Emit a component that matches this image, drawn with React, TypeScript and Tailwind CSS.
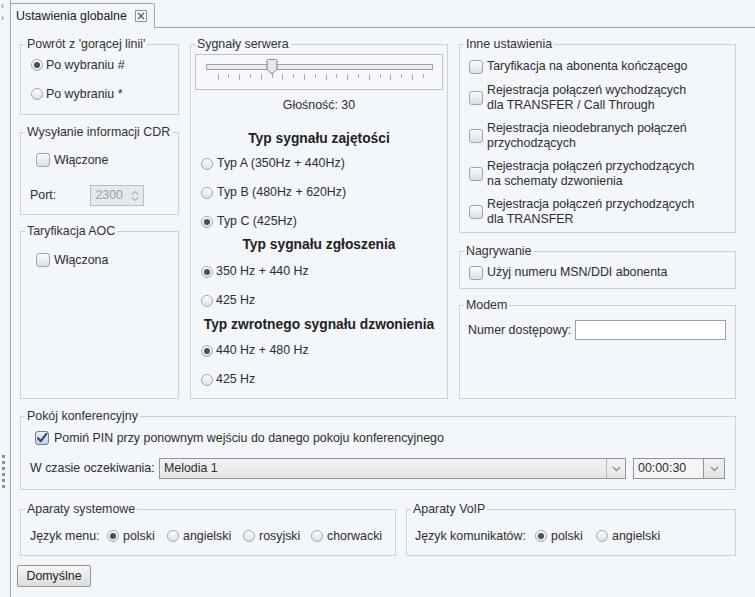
import React from "react";

function Radio({ checked }: { checked?: boolean }) {
  return (
    <span className="inline-flex w-[12px] h-[12px] rounded-full border border-[#a3a9b0] bg-linear-to-b from-[#fdfdfd] to-[#dfe2e6] items-center justify-center shrink-0">
      {checked && <span className="w-[6px] h-[6px] rounded-full bg-[#435164]" />}
    </span>
  );
}

function Check({ checked }: { checked?: boolean }) {
  if (checked)
    return (
      <span className="inline-flex w-[14px] h-[14px] rounded-[3px] border border-[#6e7f96] bg-linear-to-b from-[#e9eff7] to-[#c6d2e2] items-center justify-center shrink-0">
        <svg width="12" height="12" viewBox="0 0 12 12">
          <path d="M2 6.2 L4.8 9.2 L10.4 1.8" fill="none" stroke="#2d4f7e" strokeWidth="2.2" strokeLinecap="round" strokeLinejoin="round" />
        </svg>
      </span>
    );
  return (
    <span className="inline-block w-[14px] h-[14px] rounded-[3px] border border-[#a0a5ac] bg-linear-to-b from-[#fbfbfb] to-[#dcdfe3] shrink-0" />
  );
}

function Group({ title, className, children }: { title: string; className?: string; children?: React.ReactNode }) {
  return (
    <fieldset className={`border border-[#cdd2d8] min-w-0 ${className ?? ""}`}>
      <legend className="ml-[4px] px-[2px] leading-[15px] text-[#333]">{title}</legend>
      {children}
    </fieldset>
  );
}

function Slider() {
  const ticks = [];
  for (let i = 0; i < 20; i++) {
    const x = 22 + i * 10.8;
    ticks.push(<line key={i} x1={x} x2={x} y1={19} y2={i % 2 === 0 ? 25 : 23} stroke="#a9aeb5" strokeWidth="1" />);
  }
  return (
    <div className="mx-[4px] mt-[2px] h-[36px] border border-[#bcc1c8] bg-[#f6f8fb]">
      <svg width="244" height="34" viewBox="0 0 244 34">
        <rect x="10.5" y="9.5" width="226" height="5" fill="#eceef1" stroke="#9ca2a9" />
        <g shapeRendering="crispEdges">{ticks}</g>
        <path d="M72.5 4.5 h7 a1.5 1.5 0 0 1 1.5 1.5 v8 l-5 5 l-5 -5 v-8 a1.5 1.5 0 0 1 1.5 -1.5 z" fill="#e8eaed" stroke="#7d848c" />
      </svg>
    </div>
  );
}

export default function App() {
  return (
    <div className="w-[755px] h-[597px] bg-[#f3f6fa] flex text-[12.4px] text-[#2e2e2e] font-['Liberation_Sans',Arial,sans-serif] overflow-hidden">
      {/* left strip */}
      <div className="w-[10px] flex flex-col items-start relative">
        <div className="mt-[1px] ml-[1px] text-[9px] leading-[10px] text-[#555]">‹</div>
        <div className="mt-[2px] ml-[1px] text-[9px] leading-[10px] text-[#555]">›</div>
        <div className="mt-[432px] ml-[2px] flex flex-col gap-[3px]">
          {[0, 1, 2, 3, 4, 5].map((i) => (
            <span key={i} className="w-[3px] h-[3px] bg-[#8d939a]" />
          ))}
        </div>
      </div>
      {/* main */}
      <div className="flex-1 flex flex-col border-l border-[#9ea6af]">
        {/* tab header */}
        <div className="h-[28px] flex items-end">
          <div className="-ml-[1px] mt-[3px] h-[25px] w-[145px] border border-b-0 border-[#9ea6af] rounded-tr-[2px] bg-[#f3f6fa] flex items-center pl-[5px] gap-[8px]">
            <span className="text-[#222]">Ustawienia globalne</span>
            <span className="w-[12px] h-[12px] border border-[#8d939a] flex items-center justify-center bg-[#f7f8fa]">
              <svg width="8" height="8" viewBox="0 0 8 8">
                <path d="M1 1 L7 7 M7 1 L1 7" stroke="#555" strokeWidth="1.1" />
              </svg>
            </span>
          </div>
          <div className="flex-1 border-b border-[#9ea6af]" />
        </div>

        <div className="pl-[9px] pt-[9px] flex flex-col">
          <div className="flex gap-[11px] h-[362px]">
            {/* col 1 */}
            <div className="w-[159px] flex flex-col">
              <Group title="Powrót z 'gorącej linii'" className="h-[78px]">
                <div className="pl-[10px] pt-[5px] flex flex-col gap-[13px]">
                  <label className="flex items-center gap-[3px] h-[16px]"><Radio checked />Po wybraniu #</label>
                  <label className="flex items-center gap-[3px] h-[16px]"><Radio />Po wybraniu *</label>
                </div>
              </Group>
              <Group title="Wysyłanie informacji CDR" className="h-[90px] mt-[10px]">
                <div className="pl-[15px] pt-[12px] flex items-center gap-[4px] h-[28px]"><Check />Włączone</div>
                <div className="pl-[9px] mt-[17px] flex items-center h-[21px]">
                  <span className="w-[60px]">Port:</span>
                  <div className="w-[54px] h-[21px] border border-[#b9bec5] bg-[#e5e8ec] flex items-center justify-end pr-[4px] gap-[8px]">
                    <span className="text-[#9aa0a7]">2300</span>
                    <svg width="8" height="12" viewBox="0 0 8 12">
                      <path d="M1 4.5 L4 1.5 L7 4.5 M1 7.5 L4 10.5 L7 7.5" fill="none" stroke="#b3b8be" strokeWidth="1.2" />
                    </svg>
                  </div>
                </div>
              </Group>
              <Group title="Taryfikacja AOC" className="flex-1 mt-[9px]">
                <div className="pl-[15px] pt-[12px] flex items-center gap-[4px]"><Check />Włączona</div>
              </Group>
            </div>

            {/* col 2 */}
            <Group title="Sygnały serwera" className="w-[258px] h-[362px]">
              <Slider />
              <div className="text-center mt-[8px] h-[14px] leading-[14px]">Głośność: 30</div>
              <div className="text-center font-bold text-[13.8px] mt-[19px] h-[16px] leading-[16px] text-[#222]">Typ sygnału zajętości</div>
              <div className="pl-[10px] flex flex-col">
                <label className="flex items-center gap-[4px] h-[29px] mt-[2px]"><Radio />Typ A (350Hz + 440Hz)</label>
                <label className="flex items-center gap-[4px] h-[29px]"><Radio />Typ B (480Hz + 620Hz)</label>
                <label className="flex items-center gap-[4px] h-[29px]"><Radio checked />Typ C (425Hz)</label>
              </div>
              <div className="text-center font-bold text-[13.8px] mt-[1px] h-[16px] leading-[16px] text-[#222]">Typ sygnału zgłoszenia</div>
              <div className="pl-[10px] flex flex-col">
                <label className="flex items-center gap-[3px] h-[29px] mt-[4px]"><Radio checked />350 Hz + 440 Hz</label>
                <label className="flex items-center gap-[3px] h-[29px]"><Radio />425 Hz</label>
              </div>
              <div className="text-center font-bold text-[13.8px] mt-[2px] h-[16px] leading-[16px] text-[#222]">Typ zwrotnego sygnału dzwonienia</div>
              <div className="pl-[10px] flex flex-col">
                <label className="flex items-center gap-[3px] h-[29px] mt-[3px]"><Radio checked />440 Hz + 480 Hz</label>
                <label className="flex items-center gap-[3px] h-[29px]"><Radio />425 Hz</label>
              </div>
            </Group>

            {/* col 3 */}
            <div className="w-[277px] flex flex-col">
              <Group title="Inne ustawienia" className="h-[196px]">
                <div className="pl-[9px] pr-[2px] flex flex-col leading-[15px]">
                  <div className="flex items-center gap-[4px] mt-[7px] h-[15px]"><Check />Taryfikacja na abonenta kończącego</div>
                  <div className="flex items-center gap-[4px] mt-[9px]"><Check /><span>Rejestracja połączeń wychodzących<br />dla TRANSFER / Call Through</span></div>
                  <div className="flex items-center gap-[4px] mt-[8px]"><Check /><span>Rejestracja nieodebranych połączeń<br />przychodzących</span></div>
                  <div className="flex items-center gap-[4px] mt-[8px]"><Check /><span>Rejestracja połączeń przychodzących<br />na schematy dzwonienia</span></div>
                  <div className="flex items-center gap-[4px] mt-[8px]"><Check /><span>Rejestracja połączeń przychodzących<br />dla TRANSFER</span></div>
                </div>
              </Group>
              <Group title="Nagrywanie" className="h-[45px] mt-[11px]">
                <div className="pl-[9px] mt-[6px] flex items-center gap-[4px] h-[15px]"><Check />Użyj numeru MSN/DDI abonenta</div>
              </Group>
              <Group title="Modem" className="flex-1 mt-[9px]">
                <div className="pl-[8px] mt-[7px] flex items-center gap-[4px]">
                  <span>Numer dostępowy:</span>
                  <span className="w-[151px] h-[20px] border border-[#9aa0a7] bg-white" />
                </div>
              </Group>
            </div>
          </div>

          {/* Pokój */}
          <Group title="Pokój konferencyjny" className="w-[716px] h-[81px] mt-[10px]">
            <div className="pl-[14px] mt-[6px] flex items-center gap-[5px] h-[16px]"><Check checked />Pomiń PIN przy ponownym wejściu do danego pokoju konferencyjnego</div>
            <div className="pl-[9px] mt-[12px] flex items-center">
              <span className="w-[129px] whitespace-nowrap">W czasie oczekiwania:</span>
              <div className="w-[467px] h-[21px] border border-[#8f959c] bg-linear-to-b from-[#f1f1f1] to-[#e6e6e6] flex">
                <span className="flex-1 pl-[4px] leading-[19px]">Melodia 1</span>
                <span className="w-[19px] border-l border-[#b5bac0] flex items-center justify-center">
                  <svg width="9" height="6" viewBox="0 0 9 6"><path d="M1 1 L4.5 4.5 L8 1" fill="none" stroke="#8a9097" strokeWidth="1.3" /></svg>
                </span>
              </div>
              <div className="ml-[7px] w-[92px] h-[21px] flex">
                <span className="flex-1 border border-[#8f959c] bg-[#f5f5f5] pl-[4px] leading-[19px]">00:00:30</span>
                <span className="w-[21px] border border-l-0 border-[#8f959c] bg-linear-to-b from-[#f1f1f1] to-[#e4e4e4] flex items-center justify-center">
                  <svg width="9" height="6" viewBox="0 0 9 6"><path d="M1 1 L4.5 4.5 L8 1" fill="none" stroke="#8a9097" strokeWidth="1.3" /></svg>
                </span>
              </div>
            </div>
          </Group>

          {/* Aparaty */}
          <div className="flex gap-[10px] mt-[12px]">
            <Group title="Aparaty systemowe" className="w-[376px] h-[54px]">
              <div className="pl-[9px] mt-[11px] flex items-center h-[16px]">
                <span className="w-[77px]">Język menu:</span>
                <label className="flex items-center gap-[4px] w-[60px]"><Radio checked />polski</label>
                <label className="flex items-center gap-[4px] w-[76px]"><Radio />angielski</label>
                <label className="flex items-center gap-[4px] w-[68px]"><Radio />rosyjski</label>
                <label className="flex items-center gap-[4px]"><Radio />chorwacki</label>
              </div>
            </Group>
            <Group title="Aparaty VoIP" className="w-[330px] h-[54px]">
              <div className="pl-[8px] mt-[11px] flex items-center h-[16px]">
                <span className="w-[120px]">Język komunikatów:</span>
                <label className="flex items-center gap-[4px] w-[61px]"><Radio checked />polski</label>
                <label className="flex items-center gap-[4px]"><Radio />angielski</label>
              </div>
            </Group>
          </div>

          <div className="mt-[9px] -ml-[3px]">
            <button className="w-[74px] h-[22px] border border-[#8f959c] rounded-[2px] bg-linear-to-b from-[#f7f7f7] to-[#dcdcdc] text-[#222] leading-[20px]">Domyślne</button>
          </div>
        </div>
      </div>
    </div>
  );
}
